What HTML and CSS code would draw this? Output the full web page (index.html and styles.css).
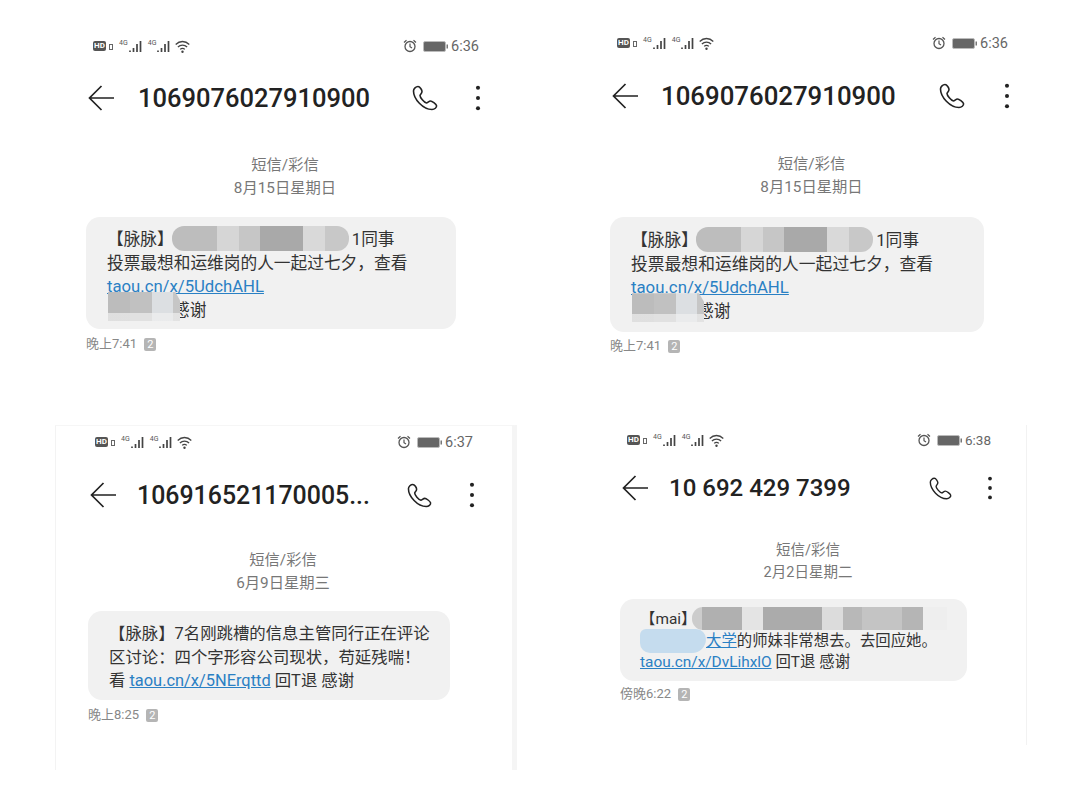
FILE: index.html
```html
<!DOCTYPE html>
<html lang="zh-CN">
<head>
    <meta charset="UTF-8">
    <meta name="viewport" content="width=device-width, initial-scale=1.0">
    <title>短信截图</title>
    <link rel="stylesheet" href="styles.css">
</head>
<body>
    <svg class="defs" width="0" height="0">
        <symbol id="bars" viewBox="0 0 13 12">
            <path d="M1 12v-1.500M4.500 12V8M8 12V4M11.500 12V1" stroke="#444" stroke-width="1.700" fill="none"/>
        </symbol>
        <symbol id="wifi" viewBox="0 0 15 13">
            <path d="M.7 4.500c4-4 9.600-4 13.600 0M2.900 7c2.600-2.600 6.600-2.600 9.200 0M5.200 9.400c1.300-1.300 3.300-1.300 4.600 0" stroke="#444" stroke-width="1.300" fill="none"/>
            <circle cx="7.500" cy="11.800" r="1.200" fill="#444"/>
        </symbol>
        <symbol id="alarm" viewBox="0 0 14 14">
            <circle cx="7" cy="7.500" r="5" fill="none" stroke="#555" stroke-width="1.300"/>
            <path d="M7 4.500v3.200l2 1.300M1 3.500l2.500-2.300M13 3.500l-2.500-2.300" fill="none" stroke="#555" stroke-width="1.200"/>
        </symbol>
        <symbol id="battery" viewBox="0 0 25 11">
            <rect x="0.500" y="0.500" width="22" height="10" rx="1.500" fill="#666" stroke="#bbb"/>
            <rect x="23.500" y="3.500" width="1.500" height="4" fill="#777"/>
        </symbol>
        <symbol id="back" viewBox="0 0 26 26">
            <path d="M26 13H1.500M13.500 1L1.500 13l12 12" fill="none" stroke="#222" stroke-width="1.700"/>
        </symbol>
        <symbol id="call" viewBox="0 0 26 26">
            <path d="M6 1.500C4 1.500 1.500 3.500 1.500 6c0 8 9.500 18.500 18.500 18.500 2.500 0 5-2 4.500-4-.5-1.500-4.500-4.500-6-4.500s-3 2-4 2c-2.500-.5-6.500-5.500-6.500-7.500 0-1 2-2 2-4C10 5 8 1.500 6 1.500z" fill="none" stroke="#222" stroke-width="1.600"/>
        </symbol>
        <symbol id="more" viewBox="0 0 6 28">
            <circle cx="3" cy="3" r="2.200" fill="#222"/>
            <circle cx="3" cy="14" r="2.200" fill="#222"/>
            <circle cx="3" cy="25" r="2.200" fill="#222"/>
        </symbol>
    </svg>

    <section class="phone phone-a">
        <div class="status">
            <div class="status-left">
                <span class="hd">HD</span><span class="hd-lock"></span>
                <span class="net">4G</span><svg class="bars"><use href="#bars"/></svg>
                <span class="net">4G</span><svg class="bars"><use href="#bars"/></svg>
                <svg class="wifi"><use href="#wifi"/></svg>
            </div>
            <div class="status-right">
                <svg class="alarm"><use href="#alarm"/></svg>
                <svg class="battery"><use href="#battery"/></svg>
                <span class="clock">6:36</span>
            </div>
        </div>
        <div class="header">
            <svg class="back"><use href="#back"/></svg>
            <span class="number">1069076027910900</span>
            <svg class="call"><use href="#call"/></svg>
            <svg class="more"><use href="#more"/></svg>
        </div>
        <div class="meta">短信/彩信<br>8月15日星期日</div>
        <div class="bubble">
            【脉脉】<span class="mask mask-name"></span>1同事<br>
            投票最想和运维岗的人一起过七夕，查看<br>
            <a class="link">taou.cn/x/5UdchAHL</a><br>
            <span class="mask mask-tail"></span>感谢
        </div>
        <div class="sent">晚上7:41 <span class="sim">2</span></div>
    </section>

    <section class="phone phone-b">
        <div class="status">
            <div class="status-left">
                <span class="hd">HD</span><span class="hd-lock"></span>
                <span class="net">4G</span><svg class="bars"><use href="#bars"/></svg>
                <span class="net">4G</span><svg class="bars"><use href="#bars"/></svg>
                <svg class="wifi"><use href="#wifi"/></svg>
            </div>
            <div class="status-right">
                <svg class="alarm"><use href="#alarm"/></svg>
                <svg class="battery"><use href="#battery"/></svg>
                <span class="clock">6:36</span>
            </div>
        </div>
        <div class="header">
            <svg class="back"><use href="#back"/></svg>
            <span class="number">1069076027910900</span>
            <svg class="call"><use href="#call"/></svg>
            <svg class="more"><use href="#more"/></svg>
        </div>
        <div class="meta">短信/彩信<br>8月15日星期日</div>
        <div class="bubble">
            【脉脉】<span class="mask mask-name"></span>1同事<br>
            投票最想和运维岗的人一起过七夕，查看<br>
            <a class="link">taou.cn/x/5UdchAHL</a><br>
            <span class="mask mask-tail"></span>感谢
        </div>
        <div class="sent">晚上7:41 <span class="sim">2</span></div>
    </section>

    <section class="phone phone-c">
        <div class="status">
            <div class="status-left">
                <span class="hd">HD</span><span class="hd-lock"></span>
                <span class="net">4G</span><svg class="bars"><use href="#bars"/></svg>
                <span class="net">4G</span><svg class="bars"><use href="#bars"/></svg>
                <svg class="wifi"><use href="#wifi"/></svg>
            </div>
            <div class="status-right">
                <svg class="alarm"><use href="#alarm"/></svg>
                <svg class="battery"><use href="#battery"/></svg>
                <span class="clock">6:37</span>
            </div>
        </div>
        <div class="header">
            <svg class="back"><use href="#back"/></svg>
            <span class="number">106916521170005...</span>
            <svg class="call"><use href="#call"/></svg>
            <svg class="more"><use href="#more"/></svg>
        </div>
        <div class="meta">短信/彩信<br>6月9日星期三</div>
        <div class="bubble">
            【脉脉】7名刚跳槽的信息主管同行正在评论<br>
            区讨论：四个字形容公司现状，苟延残喘！<br>
            看 <a class="link">taou.cn/x/5NErqttd</a> 回T退 感谢
        </div>
        <div class="sent">晚上8:25 <span class="sim">2</span></div>
    </section>

    <section class="phone phone-d">
        <div class="status">
            <div class="status-left">
                <span class="hd">HD</span><span class="hd-lock"></span>
                <span class="net">4G</span><svg class="bars"><use href="#bars"/></svg>
                <span class="net">4G</span><svg class="bars"><use href="#bars"/></svg>
                <svg class="wifi"><use href="#wifi"/></svg>
            </div>
            <div class="status-right">
                <svg class="alarm"><use href="#alarm"/></svg>
                <svg class="battery"><use href="#battery"/></svg>
                <span class="clock">6:38</span>
            </div>
        </div>
        <div class="header">
            <svg class="back"><use href="#back"/></svg>
            <span class="number">10 692 429 7399</span>
            <svg class="call"><use href="#call"/></svg>
            <svg class="more"><use href="#more"/></svg>
        </div>
        <div class="meta">短信/彩信<br>2月2日星期二</div>
        <div class="bubble">
            【mai】<span class="mask mask-long"></span><br>
            <span class="mask mask-blue"></span><a class="link">大学</a>的师妹非常想去。去回应她。<br>
            <a class="link">taou.cn/x/DvLihxlO</a> 回T退 感谢
        </div>
        <div class="sent">傍晚6:22 <span class="sim">2</span></div>
    </section>
</body>
</html>
```

FILE: styles.css
```css
body {
    margin: 0;
    background-color: #fff;
    font-family: 'Roboto', 'Noto Sans CJK SC', sans-serif;
    color: #333;
}

.defs {
    position: absolute;
}

/* each phone is a loose screenshot on the canvas */
.phone {
    position: absolute;
    box-sizing: border-box;
    --body-size: 16.7px;
    --line: 23.5px;
    --number: 25.5px;
    --icon: 26px;
    --arrow-gap: 24px;
    --dots-gap: 37px;
    --dots: 26px;
    --meta-size: 15.3px;
    --meta-line: 23px;
    --meta-top: 38px;
    --bubble-top: 17px;
    --sent-top: 7px;
    --clock: 14.5px;
}

.phone-a {
    left: 86px;
    top: 36px;
    width: 398px;
    --header-top: 24px;
}

.phone-b {
    left: 610px;
    top: 33px;
    width: 403px;
    --body-size: 16.8px;
    --line: 23.7px;
    --number: 25.8px;
    --header-top: 25px;
    --arrow-gap: 23px;
    --dots-gap: 39px;
    --meta-top: 39px;
    --bubble-top: 18px;
    --sent-top: 6px;
}

.phone-c {
    left: 55px;
    top: 425px;
    width: 462px;
    height: 345px;
    padding: 6px 34px 0 32px;
    border-top: 1px solid #f6f6f6;
    border-left: 1px solid #f3f3f3;
    border-right: 5px solid #f5f5f5;
    --body-size: 16.4px;
    --number: 24.9px;
    --header-top: 25px;
    --arrow-gap: 21px;
    --icon: 25px;
    --meta-top: 36px;
    --bubble-top: 16px;
}

.phone-d {
    left: 620px;
    top: 425px;
    width: 407px;
    height: 320px;
    padding: 5px 30px 0 0;
    border-right: 1px solid #f2f2f2;
    --body-size: 15.4px;
    --line: 21.5px;
    --number: 24px;
    --header-top: 20px;
    --arrow-gap: 21px;
    --icon: 23px;
    --dots-gap: 35px;
    --dots: 24px;
    --meta-size: 14.5px;
    --meta-line: 22px;
    --meta-top: 34px;
    --bubble-top: 15px;
    --sent-top: 5px;
    --clock: 13.5px;
}

.status {
    display: flex;
    align-items: center;
    justify-content: space-between;
    height: 20px;
    padding: 0 5px 0 7px;
}

.status-left {
    display: flex;
    align-items: center;
    height: 15px;
}

.hd {
    width: 13px;
    height: 10px;
    background-color: #555;
    border-radius: 2px;
    font-size: 8px;
    font-weight: 700;
    line-height: 10px;
    text-align: center;
    color: #fff;
}

.hd-lock {
    box-sizing: border-box;
    width: 4px;
    height: 6px;
    margin: 2px 0 0 3px;
    border: 1px solid #666;
}

.net {
    align-self: flex-start;
    margin-left: 6px;
    font-size: 7px;
    line-height: 8px;
    color: #555;
}

.bars {
    width: 13px;
    height: 12px;
    margin-left: 1px;
}

.wifi {
    width: 15px;
    height: 13px;
    margin-left: 5px;
}

.status-right {
    display: flex;
    align-items: center;
}

.alarm {
    width: 14px;
    height: 14px;
    margin-right: 6px;
}

.battery {
    width: 25px;
    height: 11px;
    margin-right: 3px;
}

.clock {
    font-size: var(--clock);
    color: #666;
}

.header {
    display: flex;
    align-items: center;
    height: 36px;
    margin-top: var(--header-top);
    padding: 0 3px 0 2px;
}

.back {
    width: 26px;
    height: 26px;
    margin-right: var(--arrow-gap);
}

.number {
    flex: 1;
    font-size: var(--number);
    font-weight: 500;
    color: #222;
    white-space: nowrap;
}

.call {
    width: var(--icon);
    height: var(--icon);
    margin-right: var(--dots-gap);
}

.more {
    width: 6px;
    height: var(--dots);
}

.meta {
    margin-top: var(--meta-top);
    text-align: center;
    font-size: var(--meta-size);
    line-height: var(--meta-line);
    color: #777;
}

.bubble {
    width: 370px;
    box-sizing: border-box;
    margin-top: var(--bubble-top);
    padding: 11px 0 7px 21px;
    background-color: #f1f1f1;
    border-radius: 14px;
    font-size: var(--body-size);
    line-height: var(--line);
    white-space: nowrap;
}

.phone-b .bubble {
    width: 374px;
    padding: 12px 0 8px 21px;
}

.phone-c .bubble {
    width: 362px;
}

.phone-d .bubble {
    width: 347px;
    padding: 10px 0 7px 20px;
}

.link {
    color: #2a80c4;
    text-decoration: underline;
}

.sent {
    margin-top: var(--sent-top);
    font-size: 13px;
    line-height: 16px;
    color: #888;
}

.sim {
    display: inline-block;
    width: 12px;
    height: 13px;
    margin-left: 4px;
    background-color: #b5b5b5;
    border-radius: 2px;
    font-size: 11px;
    line-height: 13px;
    text-align: center;
    color: #fff;
}

/* redacted bits, sit on top of the text */
.mask {
    display: inline-block;
    position: relative;
    vertical-align: middle;
}

.mask-name {
    width: 177px;
    height: 25px;
    margin: -5px 3px -1px -2px;
    border-radius: 12px;
    background: linear-gradient(90deg, #bdbdbd 0 45px, #d6d6d6 45px 67px, #c6c6c6 67px 88px, #a9a9a9 88px 131px, #d9d9d9 131px 153px, #c8c8c8 153px);
}

.mask-tail {
    width: 72px;
    height: 29px;
    margin: -11px -7px -1px 1px;
    background: linear-gradient(180deg, transparent 0 21px, #f1f1f1aa 21px), linear-gradient(90deg, #bcbcbc 0 22px, #c1c1c1 22px 44px, #dcdfe2 44px 65px, #c6c6c6 65px);
    clip-path: polygon(0 0, 93% 0, 100% 30%, 100% 100%, 0 100%);
}

.mask-long {
    width: 255px;
    height: 23px;
    margin: -4px 0 -1px -4px;
    border-radius: 11px 0 0 11px;
    background: linear-gradient(90deg, #ccc 0 10px, #b0b0b0 10px 50px, #e4e4e4 50px 71px, #ababab 71px 130px, #dcdcdc 130px 151px, #b8b8b8 151px 170px, #c4c4c4 170px 210px, #b5b5b5 210px 231px, #eee 231px);
}

.mask-blue {
    width: 66px;
    height: 24px;
    margin: -2px 0 -2px 0;
    border-radius: 6px 10px 14px 10px;
    background-color: #c5dcee;
}
```
